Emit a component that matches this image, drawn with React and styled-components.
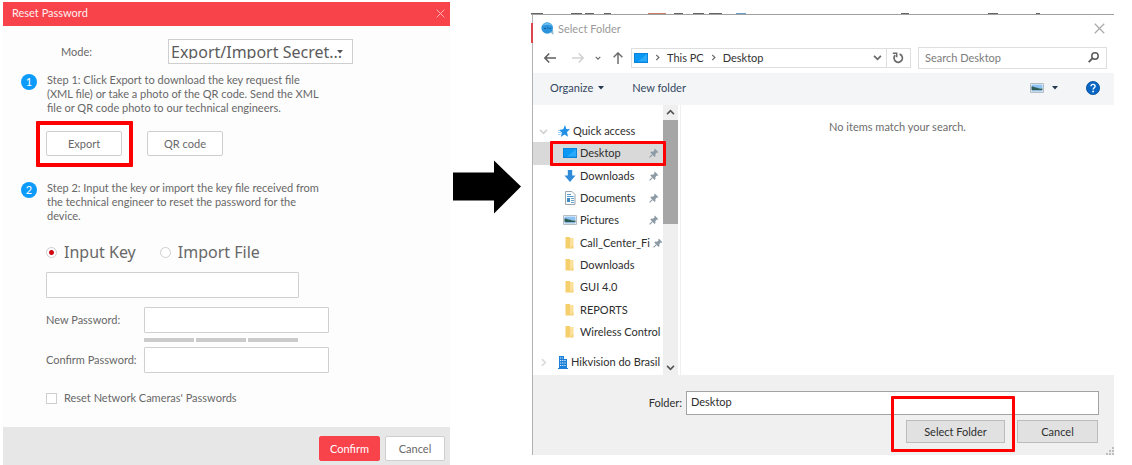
import React from 'react';
import styled, { createGlobalStyle } from 'styled-components';

const GlobalStyle = createGlobalStyle`
  * { box-sizing: border-box; }
  body {
    margin: 0;
    background: #fff;
    font-family: Lato, "Noto Sans", sans-serif;
    font-size: 11px;
    line-height: 14px;
  }
  button, input, select { font: inherit; color: inherit; margin: 0; }
`;

const Page = styled.main`
  display: flex;
  align-items: flex-start;
  padding: 2px 18px 0 3px;
`;

/* Red frame drawn over the control the reader should click */
const Marked = styled.div`
  position: relative;
  display: flex;
  &::after {
    content: '';
    position: absolute;
    inset: ${(p) => p.$inset || '-10px -11px -11px -10px'};
    border: ${(p) => p.$line || 4}px solid #fe0000;
    border-radius: 1px;
    pointer-events: none;
  }
`;

/* ---------- Reset password dialog ---------- */

const ResetDialog = styled.section`
  flex: 447 1 0;
  min-width: 0;
  background: #fdfdfd;
  color: #686868;
`;

const ResetTitle = styled.header`
  display: flex;
  align-items: center;
  justify-content: space-between;
  height: 24px;
  padding: 0 5px 2px 9px;
  background: #f9434b;
  color: #fff0f0;
  h1 { margin: 0; font-size: 11px; font-weight: 400; }
`;

const IconButton = styled.button`
  display: flex;
  align-items: center;
  justify-content: center;
  padding: 0;
  border: 0;
  background: none;
`;

const ResetBody = styled.form`
  padding: 13px 20px 22px 18px;
`;

const ModeRow = styled.div`
  display: flex;
  align-items: center;
  padding-left: 40px;
  label { width: 107px; }
`;

const SelectWrap = styled.div`
  position: relative;
  width: 185px;
  svg { position: absolute; right: 10px; top: 11px; pointer-events: none; }
`;

const ModeSelect = styled.select`
  appearance: none;
  display: block;
  width: 100%;
  height: 25px;
  padding: 0 0 0 2px;
  border: 1px solid #cfcfcf;
  border-radius: 0;
  background: #fff;
  color: #5c5c5c;
  font-family: "Noto Sans", sans-serif;
  font-size: 16px;
`;

const Step = styled.div`
  display: flex;
  align-items: flex-start;
  gap: 10px;
  margin-top: ${(p) => p.$top}px;
  p { margin: 0; width: 286px; }
`;

const Badge = styled.span`
  flex: none;
  width: 16px;
  height: 16px;
  margin-top: 1px;
  border-radius: 50%;
  background: #0d9bfb;
  color: #fff;
  line-height: 16px;
  text-align: center;
`;

const Indented = styled.div`
  padding-left: 25px;
`;

const ExportRow = styled.div`
  display: flex;
  gap: 25px;
  margin-top: 16px;
`;

const Button = styled.button`
  height: 25px;
  width: ${(p) => p.$width || 76}px;
  padding: 0;
  border: 1px solid ${(p) => (p.$primary ? '#f9434b' : '#cfcfcf')};
  border-radius: 2px;
  background: ${(p) => (p.$primary ? '#f9434b' : '#fff')};
  color: ${(p) => (p.$primary ? '#fff' : '#686868')};
`;

const RadioRow = styled.div`
  display: flex;
  gap: 24px;
  margin-top: 18px;
`;

const Choice = styled.label`
  display: flex;
  align-items: center;
  gap: 7px;
  font-family: ${(p) => (p.$large ? '"Noto Sans", sans-serif' : 'inherit')};
  font-size: ${(p) => (p.$large ? 16 : 11)}px;
  line-height: ${(p) => (p.$large ? 22 : 14)}px;
  input {
    appearance: none;
    flex: none;
    width: 11px;
    height: 11px;
    border: 1px solid #cfcfcf;
    background: #fff;
  }
  input[type='radio'] { border-radius: 50%; }
  input[type='radio']:checked {
    background: radial-gradient(circle, #cf0a12 0 2px, #fff 3px);
  }
  input[type='checkbox']:checked { background: #cf0a12; }
`;

const KeyField = styled.div`
  margin-top: 9px;
`;

const TextBox = styled.input`
  display: block;
  width: ${(p) => p.$width}px;
  height: 26px;
  padding: 0 4px;
  border: 1px solid #d0d0d0;
  border-radius: 1px;
  background: #fff;
`;

const PasswordGrid = styled.div`
  display: grid;
  grid-template-columns: 98px 185px;
  align-items: center;
  margin-top: 9px;
  label { white-space: nowrap; }
`;

const Strength = styled.div`
  grid-column: 2;
  display: grid;
  grid-template-columns: repeat(3, 50px);
  gap: 2px;
  padding: 5px 0;
  span { height: 4px; background: #cbcbcb; }
`;

const CameraRow = styled.div`
  margin-top: 18px;
`;

const ResetFooter = styled.footer`
  display: flex;
  justify-content: flex-end;
  gap: 5px;
  padding: 9px 5px 4px;
  background: #e7e7e7;
`;

/* ---------- Arrow between the dialogs ---------- */

const ArrowColumn = styled.div`
  flex: 0 0 81px;
  padding: 155px 0 0 3px;
  svg { display: block; }
`;

/* ---------- Folder picker ---------- */

const Picker = styled.section`
  flex: 583 1 0;
  min-width: 0;
  padding-top: 11px;
  color: #2e2e2e;
`;

const Backdrop = styled.svg`
  display: block;
  width: 100%;
  height: 2px;
`;

const PickerFrame = styled.div`
  position: relative;
  margin-left: 1px;
  border-left: 1px solid #b2b2b2;
`;

const RedSliver = styled.span`
  position: absolute;
  left: -2px;
  top: 8px;
  width: 2px;
  height: 20px;
  background: #d9474c;
`;

const PickerTitle = styled.header`
  display: flex;
  align-items: center;
  gap: 4px;
  height: 27px;
  padding: 0 9px 0 8px;
  color: #999;
  h2 { flex: 1; margin: 0; font-size: 11px; font-weight: 400; }
`;

const AddressRow = styled.div`
  display: flex;
  align-items: center;
  height: 31px;
  padding: 0 7px 0 11px;
`;

const NavButtons = styled.div`
  display: flex;
  align-items: center;
  gap: 11px;
  width: 87px;
`;

const NavSpaced = styled(IconButton)`
  padding-left: 5px;
`;

const AddressBar = styled.div`
  flex: 270 1 0;
  display: flex;
  align-items: center;
  gap: 6px;
  height: 20px;
  padding: 0 6px 0 2px;
  border: 1px solid #dedede;
  color: #333;
  a { color: inherit; text-decoration: none; }
`;

const AddressEnd = styled.div`
  display: flex;
  align-items: center;
  gap: 4px;
  height: 18px;
  margin-left: auto;
`;

const Refresh = styled(IconButton)`
  height: 18px;
  padding-left: 5px;
  border-left: 1px solid #dedede;
`;

const SearchBox = styled.label`
  flex: 174 1 0;
  display: flex;
  align-items: center;
  height: 22px;
  margin-left: 7px;
  padding: 0 7px 0 6px;
  border: 1px solid #dedede;
  input {
    flex: 1;
    min-width: 0;
    padding: 0;
    border: 0;
    background: none;
    outline: 0;
  }
  input::placeholder { color: #7c7c7c; opacity: 1; }
`;

const Toolbar = styled.div`
  display: flex;
  align-items: center;
  gap: 28px;
  height: 32px;
  padding: 0 14px 2px 17px;
  background: #f4f5f7;
  color: #33475f;
`;

const ToolButton = styled(IconButton)`
  gap: ${(p) => p.$gap || 5}px;
  margin-left: ${(p) => (p.$end ? 'auto' : 0)};
`;

const Content = styled.div`
  display: flex;
  height: 270px;
`;

const Tree = styled.nav`
  display: flex;
  flex-direction: column;
  width: 130px;
  padding-top: 15px;
  ul { flex: 1; display: flex; flex-direction: column; margin: 0; padding: 0; list-style: none; }
  li { flex: 1; display: flex; flex-direction: column; }
`;

const TreeLink = styled.a`
  flex: 1;
  display: flex;
  align-items: center;
  gap: 3px;
  min-width: 0;
  padding-left: ${(p) => (p.$root ? 6 : 30)}px;
  background: ${(p) => (p.$selected ? '#d9d9d9' : 'transparent')};
  color: inherit;
  text-decoration: none;
  white-space: nowrap;
  svg { flex: none; }
  > svg:first-child { margin-right: ${(p) => (p.$root ? 7 : 0)}px; }
  > span { flex: 1; }
`;

const TreeTail = styled.div`
  display: flex;
  height: 22px;
  margin: 8px 0 2px;
`;

const SelectedRow = styled(Marked)`
  flex: 1;
  &::after { left: 17px; right: -3px; }
`;

const ScrollBar = styled.div`
  display: flex;
  flex-direction: column;
  width: 18px;
  padding-right: 3px;
  border-right: 1px solid #f0f0f0;
  background: linear-gradient(#efefef, #efefef) 0 0 / 15px 100% no-repeat;
  button { height: 15px; flex: none; }
`;

const Track = styled.div`
  flex: 1;
`;

const Thumb = styled.div`
  height: 104px;
  width: 15px;
  background: #a6a6a6;
`;

const Results = styled.div`
  flex: 1;
  padding: 15px 0 0;
  color: #6d6d6d;
  text-align: center;
`;

const PickerFooter = styled.footer`
  position: relative;
  padding: 16px 15px 12px;
  background: #f0f0f0;
  > svg { position: absolute; right: 0; bottom: 0; }
`;

const FolderRow = styled.div`
  display: flex;
  align-items: center;
  gap: 4px;
  label { width: 134px; text-align: right; }
`;

const FolderInput = styled.input`
  flex: 1;
  min-width: 0;
  height: 24px;
  padding: 0 4px 3px;
  border: 1px solid #a3a3a3;
  background: #fff;
`;

const PickerActions = styled.div`
  display: flex;
  justify-content: flex-end;
  gap: 12px;
  margin-top: 5px;
  padding-right: 1px;
`;

const GreyButton = styled.button`
  width: ${(p) => p.$width}px;
  height: 23px;
  padding: 0;
  border: 1px solid #bcbcbc;
  background: #e1e1e1;
`;

/* ---------- Icons ---------- */

const Caret = ({ color = '#26384f' }) => (
  <svg width="6" height="4" viewBox="0 0 6 4"><path d="M0 0h6L3 3.4z" fill={color} /></svg>
);

const Cross = ({ size, color }) => (
  <svg width={size} height={size} viewBox="0 0 10 10">
    <path d="M.7.7l8.6 8.6M9.3.7L.7 9.3" stroke={color} strokeWidth="1.1" fill="none" />
  </svg>
);

const Chevron = ({ dir = 'down', color = '#6b6b6b', w = 9, weight = 1.8 }) => {
  const turn = { down: 0, up: 180, right: -90 }[dir];
  return (
    <svg width={w} height={w} viewBox="0 0 10 10">
      <path d="M1.2 3.2L5 7l3.8-3.8" transform={`rotate(${turn} 5 5)`} fill="none" stroke={color} strokeWidth={weight} />
    </svg>
  );
};

const Arrow = ({ turn = 0, color }) => (
  <svg width="12" height="12" viewBox="0 0 12 12">
    <path d="M12 6H1M5.2 1.6L.9 6l4.3 4.4" transform={`rotate(${turn} 6 6)`} fill="none" stroke={color} strokeWidth="1.5" />
  </svg>
);

const Screen = () => (
  <svg width="14" height="10" viewBox="0 0 14 10">
    <path d="M0 0h14v10H0z" fill="#0b84dc" />
    <path d="M1 1h12v7.6H1z" fill="#0a98f5" />
    <path d="M13 1v7.6H4z" fill="#2baafb" />
  </svg>
);

const Globe = () => (
  <svg width="13" height="13" viewBox="0 0 13 13">
    <path d="M8 9l4.500 4-.3-5z" fill="#8fb9d4" />
    <circle cx="6.200" cy="6" r="5.800" fill="#2b93dc" />
    <path d="M1 4a5.800 5.800 0 0 1 10.400 0C8 2.500 4 2.500 1 4z" fill="#66b9ee" />
    <path d="M3 6.500h2M6 6h1.500M8.500 6.500h1.500" stroke="#125b98" strokeWidth="1.200" />
  </svg>
);

const RefreshIcon = () => (
  <svg width="12" height="12" viewBox="0 0 12 12">
    <path d="M7.600 2.100A4.200 4.200 0 1 1 3.200 3.200" fill="none" stroke="#6b6b6b" strokeWidth="1.700" />
    <path d="M.8 1.300h3.900v4" fill="none" stroke="#6b6b6b" strokeWidth="1.500" />
  </svg>
);

const SearchIcon = () => (
  <svg width="11" height="11" viewBox="0 0 11 11">
    <circle cx="7" cy="4" r="3.200" fill="none" stroke="#5c5c5c" strokeWidth="1.500" />
    <path d="M4.700 6.200L.7 10.200" stroke="#5c5c5c" strokeWidth="1.900" />
  </svg>
);

const Photo = () => (
  <svg width="14" height="10" viewBox="0 0 14 10">
    <path d="M.5.5h13v9H.5z" fill="#fff" stroke="#b4bcc4" />
    <path d="M1.500 1.500h11v4h-11z" fill="#8cc3f2" />
    <path d="M1.500 3.600c3 0 5 2 11 2v1.400h-11z" fill="#2d5d57" />
    <path d="M1.500 7h11v1.500h-11z" fill="#8fb8dc" />
  </svg>
);

const Help = () => (
  <svg width="14" height="14" viewBox="0 0 14 14">
    <circle cx="7" cy="7" r="6.600" fill="#0a66c4" stroke="#0a4f9c" strokeWidth=".8" />
    <path d="M5 5.300c0-2.600 4.100-2.500 4.100-.1 0 1.500-2 1.600-2 3.400" fill="none" stroke="#fff" strokeWidth="1.400" />
    <circle cx="7.100" cy="10.500" r=".9" fill="#fff" />
  </svg>
);

const Star = () => (
  <svg width="12" height="12" viewBox="0 0 12 12">
    <path d="M7 0l1.300 4 3.700.3-3 2.800 1 4.600-3.500-2.300L2.900 12l1-4.600L1 5l4.200-.8z" fill="#2090e6" />
    <path d="M0 7.500h3M0 9.500h2.500M0 5.500h2" stroke="#7cc4f5" strokeWidth=".8" />
  </svg>
);

const DownArrow = () => (
  <svg width="14" height="12" viewBox="0 0 14 12">
    <path d="M4.800 0h4.400v5.500h3.300L7 12 1.500 5.500h3.300z" fill="#2f8ad8" />
  </svg>
);

const DocumentIcon = () => (
  <svg width="14" height="14" viewBox="0 0 14 14">
    <path d="M2.500.5h6.500l3 3v10H2.500z" fill="#fafcfe" stroke="#9aa5ae" />
    <path d="M4 3.500h4M4 5.500h6.500" stroke="#5a9ccc" />
    <path d="M4 7h3v4H4z" fill="#3d8ac7" />
    <path d="M8 7.500h3M8 9.500h3M8 11.500h3" stroke="#6aa6d0" />
  </svg>
);

const FolderIcon = () => (
  <svg width="14" height="12" viewBox="0 0 14 12">
    <path d="M2.500 0h4.500l.5 8h3v3.500h-8z" fill="#f5cf6c" />
    <path d="M7 1h3.500v7L7 11.500z" fill="#fbe09a" />
  </svg>
);

const Building = () => (
  <svg width="10" height="13" viewBox="0 0 10 13">
    <path d="M1 0h5v3h3v10H1z" fill="#1c80d8" />
    <path d="M0 12.500h10" stroke="#1c80d8" />
    <path d="M2 2h3M2 4.500h6M2 7h6M2 9.500h6" stroke="#e4f2ff" strokeWidth="1" strokeDasharray="1.200 1" />
  </svg>
);

const Pin = () => (
  <svg width="14" height="10" viewBox="0 0 14 10">
    <path d="M5.800.6l3.600 3.600-1 .5-.6-.2-1.500 1.700.2 1.800-.9.900L1.300 4.500l.9-.9 1.800.2L5.600 2.200 5.300 1.500z" fill="#8c9aa6" />
    <path d="M3.400 6.600L.6 9.400" stroke="#8c9aa6" strokeWidth="1.100" />
  </svg>
);

const Grip = () => (
  <svg width="8" height="8" viewBox="0 0 8 8" fill="#bdbdbd">
    <path d="M6 0h2v2H6zM3 3h2v2H3zM6 3h2v2H6zM0 6h2v2H0zM3 6h2v2H3zM6 6h2v2H6z" />
  </svg>
);

/* ---------- Data ---------- */

const folders = [
  { name: 'Desktop', icon: <Screen />, pinned: true, selected: true },
  { name: 'Downloads', icon: <DownArrow />, pinned: true },
  { name: 'Documents', icon: <DocumentIcon />, pinned: true },
  { name: 'Pictures', icon: <Photo />, pinned: true },
  { name: 'Call_Center_Fi', icon: <FolderIcon />, pinned: true },
  { name: 'Downloads', icon: <FolderIcon /> },
  { name: 'GUI 4.0', icon: <FolderIcon /> },
  { name: 'REPORTS', icon: <FolderIcon /> },
  { name: 'Wireless Control', icon: <FolderIcon /> },
];

function FolderEntry({ item }) {
  const link = (
    <TreeLink href="#" $selected={item.selected}>
      {item.icon}
      <span>{item.name}</span>
      {item.pinned && <Pin />}
    </TreeLink>
  );
  return <li>{item.selected ? <SelectedRow $inset="-1px" $line={3}>{link}</SelectedRow> : link}</li>;
}

function ResetPassword() {
  return (
    <ResetDialog>
      <ResetTitle>
        <h1>Reset Password</h1>
        <IconButton type="button" aria-label="Close"><Cross size={9} color="#fcb4b7" /></IconButton>
      </ResetTitle>
      <ResetBody id="reset" onSubmit={(e) => e.preventDefault()}>
        <ModeRow>
          <label htmlFor="mode">Mode:</label>
          <SelectWrap>
            <ModeSelect id="mode"><option>Export/Import Secret...</option></ModeSelect>
            <Caret color="#555" />
          </SelectWrap>
        </ModeRow>
        <Step $top={9}>
          <Badge>1</Badge>
          <p>
            Step 1: Click Export to download the key request file<br />
            (XML file) or take a photo of the QR code. Send the XML<br />
            file or QR code photo to our technical engineers.
          </p>
        </Step>
        <Indented>
          <ExportRow>
            <Marked><Button type="button">Export</Button></Marked>
            <Button type="button">QR code</Button>
          </ExportRow>
        </Indented>
        <Step $top={25}>
          <Badge>2</Badge>
          <p>
            Step 2: Input the key or import the key file received from<br />
            the technical engineer to reset the password for the<br />
            device.
          </p>
        </Step>
        <Indented>
          <RadioRow>
            <Choice $large><input type="radio" name="method" defaultChecked />Input Key</Choice>
            <Choice $large><input type="radio" name="method" />Import File</Choice>
          </RadioRow>
          <KeyField>
            <TextBox $width={253} aria-label="Key" />
          </KeyField>
          <PasswordGrid>
            <label htmlFor="new-password">New Password:</label>
            <TextBox $width={185} id="new-password" type="password" />
            <Strength><span /><span /><span /></Strength>
            <label htmlFor="confirm-password">Confirm Password:</label>
            <TextBox $width={185} id="confirm-password" type="password" />
          </PasswordGrid>
          <CameraRow>
            <Choice><input type="checkbox" />Reset Network Cameras&apos; Passwords</Choice>
          </CameraRow>
        </Indented>
      </ResetBody>
      <ResetFooter>
        <Button $primary $width={61} type="submit" form="reset">Confirm</Button>
        <Button $width={60} type="button">Cancel</Button>
      </ResetFooter>
    </ResetDialog>
  );
}

function FolderPicker() {
  return (
    <Picker>
      <Backdrop viewBox="0 0 583 2" preserveAspectRatio="none" aria-hidden="true">
        <path d="M0 1.500h583" stroke="#a0a0a0" />
        <path d="M0 .5h12M40 .5h11M54 .5h9M73 .5h7M143 .5h9M162 .5h11M178 .5h13M370 .5h8M457 .5h10M505 .5h4" stroke="#666" />
        <path d="M117 .5h18" stroke="#c97a66" />
        <path d="M205 .5h10" stroke="#6b9cc4" />
      </Backdrop>
      <PickerFrame>
        <RedSliver />
        <PickerTitle>
          <Globe />
          <h2>Select Folder</h2>
          <IconButton type="button" aria-label="Close"><Cross size={11} color="#aaa" /></IconButton>
        </PickerTitle>
        <AddressRow>
          <NavButtons>
            <IconButton aria-label="Back"><Arrow color="#5f5f5f" /></IconButton>
            <NavSpaced aria-label="Forward"><Arrow turn={180} color="#d2d2d2" /></NavSpaced>
            <IconButton aria-label="Recent"><Chevron w={6} weight={2} /></IconButton>
            <IconButton aria-label="Up"><Arrow turn={90} color="#6f6f6f" /></IconButton>
          </NavButtons>
          <AddressBar>
            <Screen />
            <Chevron dir="right" w={7} />
            <a href="#">This PC</a>
            <Chevron dir="right" w={7} />
            <a href="#">Desktop</a>
            <AddressEnd>
              <IconButton aria-label="Previous locations"><Chevron weight={2} /></IconButton>
              <Refresh aria-label="Refresh"><RefreshIcon /></Refresh>
            </AddressEnd>
          </AddressBar>
          <SearchBox>
            <input type="text" placeholder="Search Desktop" aria-label="Search Desktop" />
            <SearchIcon />
          </SearchBox>
        </AddressRow>
        <Toolbar>
          <ToolButton>Organize <Caret /></ToolButton>
          <ToolButton>New folder</ToolButton>
          <ToolButton $end $gap={8} aria-label="Change view"><Photo /><Caret /></ToolButton>
          <ToolButton aria-label="Help"><Help /></ToolButton>
        </Toolbar>
        <Content>
          <Tree>
            <ul>
              <li>
                <TreeLink href="#" $root><Chevron color="#d2d2d2" /><Star /><span>Quick access</span></TreeLink>
              </li>
              {folders.map((item, i) => <FolderEntry key={i} item={item} />)}
            </ul>
            <TreeTail>
              <TreeLink href="#" $root><Chevron dir="right" color="#dadada" /><Building /><span>Hikvision do Brasil</span></TreeLink>
            </TreeTail>
          </Tree>
          <ScrollBar>
            <IconButton aria-label="Scroll up"><Chevron dir="up" color="#555" /></IconButton>
            <Track><Thumb /></Track>
            <IconButton aria-label="Scroll down"><Chevron color="#555" /></IconButton>
          </ScrollBar>
          <Results>No items match your search.</Results>
        </Content>
        <PickerFooter>
          <FolderRow>
            <label htmlFor="folder">Folder:</label>
            <FolderInput id="folder" defaultValue="Desktop" />
          </FolderRow>
          <PickerActions>
            <Marked $inset="-24px -10px -9px -15px" $line={3}>
              <GreyButton $width={99} type="button">Select Folder</GreyButton>
            </Marked>
            <GreyButton $width={81} type="button">Cancel</GreyButton>
          </PickerActions>
          <Grip />
        </PickerFooter>
      </PickerFrame>
    </Picker>
  );
}

export default function App() {
  return (
    <>
      <GlobalStyle />
      <Page>
        <ResetPassword />
        <ArrowColumn>
          <svg width="69" height="58" viewBox="0 0 69 58" role="img" aria-label="Then">
            <path d="M0 15.500h41V3.500L68 29.500 41 56.500V43.500H0z" />
          </svg>
        </ArrowColumn>
        <FolderPicker />
      </Page>
    </>
  );
}
